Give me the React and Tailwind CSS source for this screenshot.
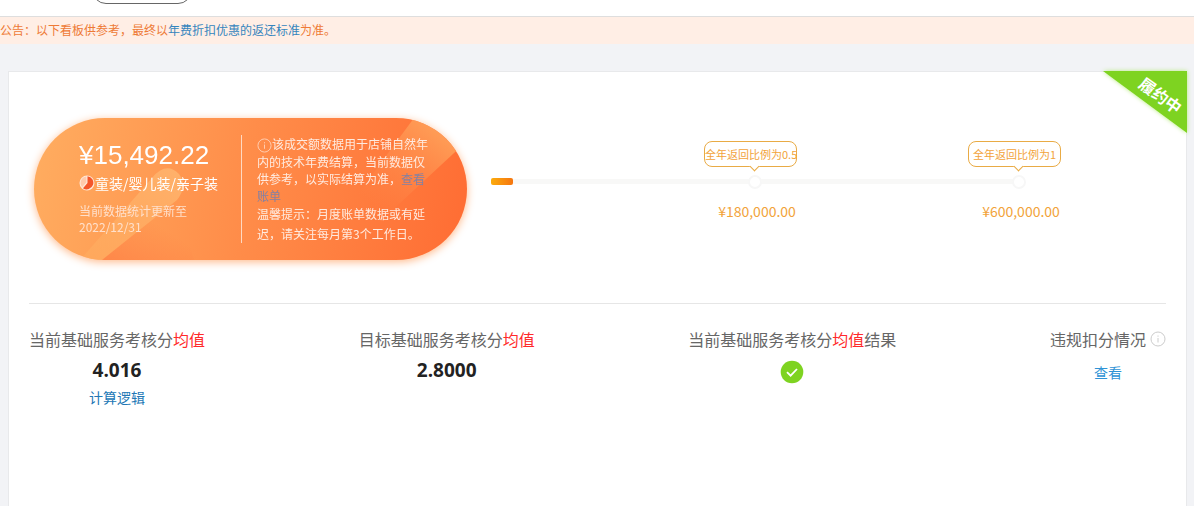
import React from 'react'

const milestones = [
    { label: '全年返回比例为0.5', amount: '¥180,000.00', position: 50 },
    { label: '全年返回比例为1', amount: '¥600,000.00', position: 100 },
]

const InfoIcon = ({ className }) => (
    <svg viewBox="0 0 16 16" fill="none" stroke="currentColor" className={className} aria-hidden="true">
        <circle cx="8" cy="8" r="7" />
        <path d="M8 4.5v1.2M8 7v4.5" />
    </svg>
)

const PieIcon = () => (
    <svg viewBox="0 0 16 16" className="h-4 w-4 shrink-0" aria-hidden="true">
        <circle cx="8" cy="8" r="7.5" fill="#ffe6d6" />
        <path d="M8.5 8V1.2A6.6 6.6 0 1 1 4 13.2Z" fill="#f4562b" />
        <path d="M7.3 7.6V1.6A6.3 6.3 0 0 0 3.2 12Z" fill="#ffc9ab" />
    </svg>
)

const CheckIcon = () => (
    <svg viewBox="0 0 24 24" className="h-6 w-6" role="img" aria-label="达标">
        <circle cx="12" cy="12" r="11.3" fill="#7ed321" />
        <path d="M7 12.2l3.6 3.5L17 9" fill="none" stroke="#fff" strokeWidth="1.8" />
    </svg>
)

const Avg = () => <span className="text-[#ff2a2a]">均值</span>

function StatItem({ title, children }) {
    return (
        <div className="flex flex-col items-center gap-y-px">
            <h2 className="flex items-center text-base leading-6 text-[#666]">{title}</h2>
            {children}
        </div>
    )
}

function AmountPanel() {
    return (
        <section className="relative ml-[5px] flex h-[142px] w-[433px] shrink-0 items-center overflow-hidden rounded-full bg-linear-100 from-[#ffad60] via-[#ff8c49] to-[#ff6c33] pl-[45px] text-white">
            <svg viewBox="0 0 433 142" className="absolute inset-0 h-full w-full" aria-hidden="true">
                <defs>
                    <linearGradient id="beam" x1="1" y1="0" x2="0" y2="1">
                        <stop offset="0" stopColor="#ffb670" stopOpacity=".85" />
                        <stop offset="1" stopColor="#ffae60" stopOpacity=".5" />
                    </linearGradient>
                    <linearGradient id="shine" gradientUnits="userSpaceOnUse" x1="405" y1="12" x2="342" y2="90">
                        <stop offset="0" stopColor="#ffa25a" stopOpacity=".9" />
                        <stop offset="1" stopColor="#ff8a4c" stopOpacity="0" />
                    </linearGradient>
                    <linearGradient id="dusk" x1="0" y1="1" x2="1" y2="0">
                        <stop offset="0" stopColor="#ff7640" stopOpacity=".6" />
                        <stop offset=".6" stopColor="#ff7640" stopOpacity="0" />
                    </linearGradient>
                </defs>
                <path d="M46 142L118 60Q132 43 145 56Q154 68 143 82L68 142Z" fill="url(#beam)" />
                <path d="M68 142L143 82L160 142Z" fill="url(#dusk)" />
                <path d="M380 0H433V23L352 98L318 84Z" fill="url(#shine)" />
            </svg>

            <div className="relative w-[162px] shrink-0 pb-1">
                <p className="font-['Liberation_Sans',sans-serif] text-[26px] leading-8">¥15,492.22</p>
                <p className="flex items-center text-sm leading-6 whitespace-nowrap">
                    <PieIcon />
                    童装/婴儿装/亲子装
                </p>
                <p className="mt-2 w-28 text-xs leading-4 text-[#ffe0cc]">当前数据统计更新至 2022/12/31</p>
            </div>

            <div className="relative h-[108px] border-l border-[#ffd9c2] pl-[15px]">
                <p className="w-[175px] text-xs leading-[17px] text-[#ffeadf]">
                    <InfoIcon className="inline h-[15px] w-[15px] align-middle text-[#ffd0b5]" />
                    该成交额数据用于店铺自然年内的技术年费结算，当前数据仅供参考，以实际结算为准，
                    <a href="#bill" className="text-[#8381a4]">查看账单</a>
                </p>
                <p className="w-[175px] text-xs leading-5 text-[#ffeadf]">
                    温馨提示：月度账单数据或有延迟，请关注每月第3个工作日。
                </p>
            </div>
        </section>
    )
}

function ProgressTrack() {
    return (
        <div className="relative mr-[147px] ml-6 h-[5px] flex-1 rounded-full bg-[#f8f8f7]">
            <div className="-mt-px h-[7px] w-[22px] rounded-xs bg-linear-to-r from-[#fbab0c] to-[#f5750f]" />
            {milestones.map((item) => (
                <div
                    key={item.amount}
                    className="absolute -top-[38px] flex w-[102px] -translate-x-1/2 flex-col items-center text-[#f2a33a]"
                    style={{ left: `${item.position}%` }}
                >
                    <div className="relative h-[26px] w-[93px] self-start rounded-lg border border-[#e9ab45] bg-white text-center text-[11px] leading-6 whitespace-nowrap">
                        {item.label}
                        <span className="absolute right-[38px] -bottom-1 h-[7px] w-[7px] rotate-45 border-r border-b border-[#e9ab45] bg-white" />
                    </div>
                    <span className="mt-2 h-3.5 w-3.5 rounded-full border-2 border-[#f7f7f7] bg-white" />
                    <span className="mt-3 pl-1 text-sm leading-5">{item.amount}</span>
                </div>
            ))}
        </div>
    )
}

export default function App() {
    return (
        <div className="flex min-h-screen flex-col bg-[#f2f3f6] font-['Noto_Sans_CJK_SC','Noto_Sans',sans-serif]">
            <header className="flex h-[17px] items-end overflow-hidden border-b border-[#dedede] bg-white pb-3 pl-[92px]">
                <button type="button" aria-label="切换" className="h-7 w-[100px] shrink-0 rounded-full border border-[#666] bg-white" />
            </header>

            <div className="h-[27px] bg-[#ffeee5] text-xs leading-[26px] text-[#ee7a35]">
                公告：以下看板供参考，最终以
                <a href="#standard" className="text-[#3585bd]">年费折扣优惠的返还标准</a>
                为准。
            </div>

            <main className="relative mr-[7px] ml-2 mt-[27px] flex-1 border border-b-0 border-[#e8e9eb] bg-white px-5">
                <div className="absolute -top-px -right-px h-[62px] w-[84px]">
                    <svg viewBox="0 0 84 62" className="h-full w-full drop-shadow-[0_0_2px_#b6ea7c]" aria-hidden="true">
                        <path d="M0 0H84V62Z" fill="#7ed321" />
                    </svg>
                    <span className="absolute top-3 right-0.5 rotate-[36deg] text-base leading-6 font-bold text-white">履约中</span>
                </div>

                <div className="flex items-center border-b border-[#e6e6e6] pt-[46px] pb-[43px]">
                    <div className="rounded-full drop-shadow-[0_2px_4px_#ffb98a]">
                        <AmountPanel />
                    </div>
                    <div className="-mt-4 flex flex-1">
                        <ProgressTrack />
                    </div>
                </div>

                <div className="flex items-start justify-between pt-[23px]">
                    <StatItem title={<>当前基础服务考核分<Avg /></>}>
                        <strong className="mt-1 font-['Open_Sans',sans-serif] text-[19px] leading-7 text-[#222]">4.016</strong>
                        <a href="#logic" className="text-sm leading-6 text-[#2277b5]">计算逻辑</a>
                    </StatItem>
                    <StatItem title={<>目标基础服务考核分<Avg /></>}>
                        <strong className="mt-1 font-['Open_Sans',sans-serif] text-[19px] leading-7 text-[#222]">2.8000</strong>
                    </StatItem>
                    <StatItem title={<>当前基础服务考核分<Avg />结果</>}>
                        <div className="mt-2">
                            <CheckIcon />
                        </div>
                    </StatItem>
                    <StatItem title={<>违规扣分情况<InfoIcon className="ml-1 h-4 w-4 text-[#ccc]" /></>}>
                        <a href="#violation" className="mt-2 text-sm leading-6 text-[#2e93d6]">查看</a>
                    </StatItem>
                </div>
            </main>
        </div>
    )
}
